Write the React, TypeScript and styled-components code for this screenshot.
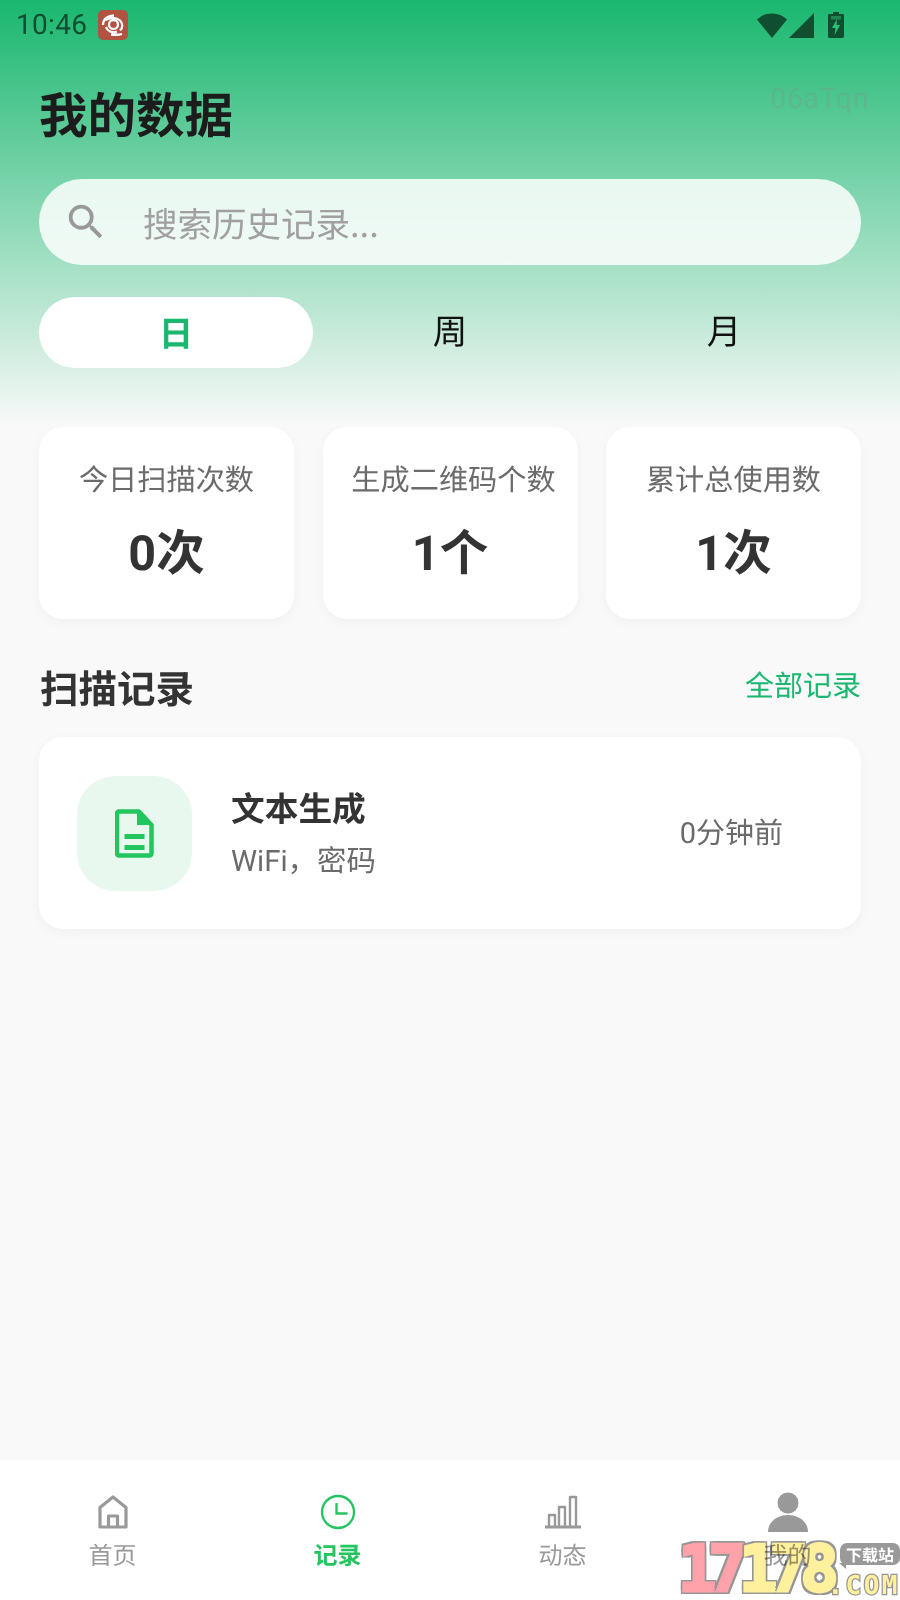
import React from "react";
import styled, { createGlobalStyle } from "styled-components";

const Global = createGlobalStyle`
  html, body { margin: 0; padding: 0; background: #f9f9f9; }
  * { box-sizing: border-box; }
  body { font-family: Roboto, "Noto Sans CJK SC", sans-serif; text-rendering: geometricPrecision; }
`;

const Page = styled.div`
  position: relative;
  width: 900px;
  height: 1600px;
  display: flex;
  flex-direction: column;
  overflow: hidden;
  background: #f9f9f9;
`;

const Header = styled.header`
  position: relative;
  height: 427px;
  padding: 0 39px;
  background: linear-gradient(180deg, #19b76f 0%, #f9f9f9 100%);
  display: flex;
  flex-direction: column;
`;

const StatusBar = styled.div`
  height: 50px;
  margin: 0 -39px;
  padding: 0 56px 0 16px;
  display: flex;
  align-items: center;
  color: #0f4f2f;
`;

const Time = styled.span`
  font-size: 28px;
  line-height: 50px;
  letter-spacing: 0.3px;
`;

const AppBadge = styled.div`
  width: 30px;
  height: 30px;
  margin-left: 11px;
  border-radius: 5px;
  background: #b25240;
  display: flex;
  align-items: center;
  justify-content: center;
`;

const StatusIcons = styled.div`
  margin-left: auto;
  display: flex;
  align-items: center;
  gap: 2px;
`;

const Title = styled.h1`
  margin: 34px 0 0;
  font-size: 48.5px;
  line-height: 56px;
  font-weight: 700;
  color: #1c1c1c;
  font-family: "Noto Sans CJK SC", sans-serif;
`;

const Ghost = styled.span`
  position: absolute;
  top: 82px;
  right: 31px;
  font-size: 28.5px;
  letter-spacing: 0.6px;
  color: rgba(140, 140, 140, 0.26);
`;

const Search = styled.div`
  margin-top: 39px;
  height: 86px;
  border-radius: 43px;
  background: rgba(255, 255, 255, 0.84);
  display: flex;
  align-items: center;
  padding: 0 0 0 24px;
  gap: 34px;
`;

const Placeholder = styled.span`
  font-size: 34.5px;
  color: #a0a0a0;
  font-family: "Noto Sans CJK SC", sans-serif;
`;

const Tabs = styled.div`
  margin-top: 32px;
  display: grid;
  grid-template-columns: repeat(3, 1fr);
`;

const Tab = styled.div<{ $active?: boolean }>`
  height: 71px;
  border-radius: 36px;
  display: flex;
  align-items: center;
  justify-content: center;
  padding-bottom: ${(p) => (p.$active ? "4px" : "8px")};
  font-size: 34.5px;
  font-family: "Noto Sans CJK SC", sans-serif;
  background: ${(p) => (p.$active ? "#fff" : "transparent")};
  color: ${(p) => (p.$active ? "#19b76f" : "#111")};
  font-weight: ${(p) => (p.$active ? 700 : 400)};
`;

const Stats = styled.section`
  padding: 0 39px;
  display: grid;
  grid-template-columns: repeat(3, 255px);
  justify-content: space-between;
`;

const StatCard = styled.div`
  height: 192px;
  border-radius: 24px;
  background: #fff;
  box-shadow: 0 3px 12px rgba(0, 0, 0, 0.04);
  display: flex;
  flex-direction: column;
  align-items: center;
`;

const StatLabel = styled.div<{ $nudge?: number }>`
  margin-top: 34px;
  margin-left: ${(p) => p.$nudge ?? 0}px;
  font-size: 29.2px;
  line-height: 40px;
  color: #6b6b6b;
  font-family: Roboto, "Noto Sans CJK SC", sans-serif;
  white-space: nowrap;
`;

const StatValue = styled.div`
  margin-top: 25px;
  font-size: 48.5px;
  line-height: 56px;
  font-weight: 700;
  color: #333;
`;

const SectionHead = styled.div`
  margin-top: 40px;
  padding: 0 39px;
  height: 52px;
  display: flex;
  align-items: center;
  justify-content: space-between;
`;

const SectionTitle = styled.h2`
  margin: 4px 0 0 1px;
  font-size: 38.5px;
  font-weight: 700;
  color: #333;
  font-family: "Noto Sans CJK SC", sans-serif;
`;

const SectionLink = styled.span`
  padding-bottom: 2px;
  font-size: 29px;
  color: #19b76f;
  font-family: "Noto Sans CJK SC", sans-serif;
`;

const RecordCard = styled.div`
  margin: 26px 39px 0;
  height: 192px;
  padding: 0 78px 0 38px;
  border-radius: 24px;
  background: #fff;
  box-shadow: 0 3px 12px rgba(0, 0, 0, 0.04);
  display: flex;
  align-items: center;
`;

const RecordIcon = styled.div`
  width: 115px;
  height: 115px;
  border-radius: 38px;
  background: #e8f8ef;
  display: flex;
  align-items: center;
  justify-content: center;
`;

const RecordBody = styled.div`
  margin-left: 39px;
  flex: 1;
`;

const RecordTitle = styled.div`
  font-size: 33.7px;
  line-height: 44px;
  font-weight: 700;
  color: #333;
  font-family: "Noto Sans CJK SC", sans-serif;
`;

const RecordSub = styled.div`
  margin-top: 13px;
  font-size: 29.4px;
  line-height: 40px;
  color: #6b6b6b;
`;

const RecordTime = styled.div`
  padding-bottom: 4px;
  font-size: 29px;
  color: #6b6b6b;
`;

const Spacer = styled.div`
  flex: 1;
`;

const Nav = styled.nav`
  height: 140px;
  background: #fff;
  display: grid;
  grid-template-columns: repeat(4, 1fr);
`;

const NavItem = styled.div<{ $active?: boolean }>`
  display: flex;
  flex-direction: column;
  align-items: center;
  padding-top: 30px;
  font-size: 24px;
  line-height: 34px;
  color: ${(p) => (p.$active ? "#22c55e" : "#999")};
  font-weight: ${(p) => (p.$active ? 700 : 400)};
  font-family: "Noto Sans CJK SC", sans-serif;
`;

const NavIcon = styled.div`
  height: 44px;
  margin-bottom: 3px;
  display: flex;
  align-items: center;
  justify-content: center;
`;

const Mark = styled.div`
  position: absolute;
  right: 0;
  bottom: 0;
  width: 222px;
  height: 62px;
  pointer-events: none;
  mix-blend-mode: multiply;
`;

const MarkNum = styled.div`
  position: absolute;
  left: 0;
  bottom: 0;
  display: flex;
  font-family: "DejaVu Sans Mono", monospace;
  font-weight: 700;
  font-size: 64px;
  line-height: 60px;
  letter-spacing: -8px;
`;

const MarkDigit = styled.span<{ $pink?: boolean }>`
  color: ${(p) => (p.$pink ? "#ffa2aa" : "#fff09d")};
  -webkit-text-stroke: 3px ${(p) => (p.$pink ? "#ffa2aa" : "#fff09d")};
  text-shadow: 3px 0 #969696, -3px 0 #969696, 0 3px #969696, 0 -3px #969696,
    3px 3px #969696, -3px 3px #969696, 3px -3px #969696, -3px -3px #969696;
`;

const MarkBadge = styled.div`
  position: absolute;
  right: 0;
  top: 5px;
  width: 60px;
  height: 22px;
  border-radius: 7px;
  background: #999;
  color: #fff;
  font-size: 16px;
  line-height: 22px;
  font-weight: 700;
  text-align: center;
  font-family: "Noto Sans CJK SC", sans-serif;

  &::before {
    content: "";
    position: absolute;
    left: -1px;
    bottom: -4px;
    border-top: 6px solid #999;
    border-left: 7px solid transparent;
  }
`;

const MarkCom = styled.div`
  position: absolute;
  right: 0;
  bottom: 2px;
  font-family: "DejaVu Sans Mono", monospace;
  font-weight: 700;
  font-size: 26px;
  line-height: 24px;
  letter-spacing: 2.500px;
  color: #fff09d;
  -webkit-text-stroke: 2.500px #969696;
  paint-order: stroke fill;
`;

export default function App() {
  return (
    <Page>
      <Global />
      <Header>
        <StatusBar>
          <Time>10:46</Time>
          <AppBadge>
            <svg width="26" height="26" viewBox="0 0 26 26" fill="none" stroke="#fff" strokeWidth="2.300">
              <circle cx="13.500" cy="12.500" r="4.500" />
              <path d="M3 13C3 7 8 3.500 14 3.500M5.500 8C9 5.500 16 5 20 8.500c3 3 3 7 0 10M6 15c1.500 4 6 6 11 5M11 22.500c4 .5 8 .5 11-.5" />
            </svg>
          </AppBadge>
          <StatusIcons>
            <svg width="30" height="26" viewBox="0 0 30 26">
              <path d="M0 7.500C4 3.500 9 1.500 15 1.500s11 2 15 6L15 26z" fill="#0f4f2f" />
            </svg>
            <svg width="25" height="25" viewBox="0 0 25 25" style={{ marginRight: 12 }}>
              <path d="M25 0v25H0z" fill="#0f4f2f" />
            </svg>
            <svg width="16" height="26" viewBox="0 0 16 26">
              <path d="M5 0h6v2h3.500c.8 0 1.500.7 1.500 1.500v21c0 .8-.7 1.500-1.500 1.500h-13C.7 26 0 25.300 0 24.500v-21C0 2.700.7 2 1.500 2H5z" fill="#0f4f2f" />
              <path d="M3 4h10v3.500H3z" fill="#2b9a63" opacity="0.7" />
              <path d="M9 7l-5 9h3.500L6.500 23 12 13H8.500z" fill="#2fc07a" />
            </svg>
          </StatusIcons>
        </StatusBar>
        <Title>我的数据</Title>
        <Ghost>06aTqn</Ghost>
        <Search>
          <svg width="46" height="46" viewBox="0 0 24 24" fill="#999">
            <path d="M15.500 14h-.79l-.28-.27A6.470 6.470 0 0 0 16 9.500 6.500 6.500 0 1 0 9.500 16c1.610 0 3.090-.59 4.230-1.570l.27.28v.79l5 4.990L20.490 19zm-6 0C7.010 14 5 11.990 5 9.500S7.010 5 9.500 5 14 7.010 14 9.500 11.990 14 9.500 14" />
          </svg>
          <Placeholder>搜索历史记录...</Placeholder>
        </Search>
        <Tabs>
          <Tab $active>日</Tab>
          <Tab>周</Tab>
          <Tab>月</Tab>
        </Tabs>
      </Header>

      <Stats>
        <StatCard>
          <StatLabel>今日扫描次数</StatLabel>
          <StatValue>0次</StatValue>
        </StatCard>
        <StatCard>
          <StatLabel $nudge={7}>生成二维码个数</StatLabel>
          <StatValue>1个</StatValue>
        </StatCard>
        <StatCard>
          <StatLabel>累计总使用数</StatLabel>
          <StatValue>1次</StatValue>
        </StatCard>
      </Stats>

      <SectionHead>
        <SectionTitle>扫描记录</SectionTitle>
        <SectionLink>全部记录</SectionLink>
      </SectionHead>

      <RecordCard>
        <RecordIcon>
          <svg width="39" height="49" viewBox="0 0 39 49">
            <path
              d="M4 2.500h20l12.500 13.500v28.500a2 2 0 0 1-2 2H4a2 2 0 0 1-2-2V4.500a2 2 0 0 1 2-2z"
              fill="none"
              stroke="#22c55e"
              strokeWidth="4.500"
              strokeLinejoin="round"
            />
            <path d="M22 1l16 15H22z" fill="#22c55e" />
            <path d="M9.500 25h20v5h-20zM9.500 36h20v5h-20z" fill="#22c55e" />
          </svg>
        </RecordIcon>
        <RecordBody>
          <RecordTitle>文本生成</RecordTitle>
          <RecordSub>WiFi，密码</RecordSub>
        </RecordBody>
        <RecordTime>0分钟前</RecordTime>
      </RecordCard>

      <Spacer />

      <Nav>
        <NavItem>
          <NavIcon>
            <svg width="30" height="34" viewBox="0 0 30 34" fill="none" stroke="#999" strokeWidth="3.200" strokeLinejoin="round">
              <path d="M2 12.500L15 2l13 10.500V32H2z" />
              <path d="M10.500 32V21h9v11" />
            </svg>
          </NavIcon>
          首页
        </NavItem>
        <NavItem $active>
          <NavIcon>
            <svg width="36" height="36" viewBox="0 0 36 36" fill="none" stroke="#22c55e" strokeWidth="2.300">
              <circle cx="18" cy="18" r="16" />
              <path d="M16.500 9v10.500h11" />
            </svg>
          </NavIcon>
          记录
        </NavItem>
        <NavItem>
          <NavIcon>
            <svg width="36" height="34" viewBox="0 0 36 34" fill="none" stroke="#999" strokeWidth="2.400" strokeLinejoin="round">
              <path d="M4 31V20h6v11M14 31V12h6v19M25 31V2h6v29" />
              <path d="M0 32h36" strokeWidth="3" />
            </svg>
          </NavIcon>
          动态
        </NavItem>
        <NavItem>
          <NavIcon>
            <svg width="40" height="40" viewBox="0 0 40 40" fill="#999">
              <circle cx="20" cy="11" r="10.500" />
              <path d="M0 40c0-10 9-17 20-17s20 7 20 17z" />
            </svg>
          </NavIcon>
          我的
        </NavItem>
      </Nav>

      <Mark>
        <MarkNum>
          <MarkDigit $pink>1</MarkDigit>
          <MarkDigit $pink>7</MarkDigit>
          <MarkDigit>1</MarkDigit>
          <MarkDigit>7</MarkDigit>
          <MarkDigit>8</MarkDigit>
        </MarkNum>
        <MarkBadge>下载站</MarkBadge>
        <MarkCom>.COM</MarkCom>
      </Mark>
    </Page>
  );
}
